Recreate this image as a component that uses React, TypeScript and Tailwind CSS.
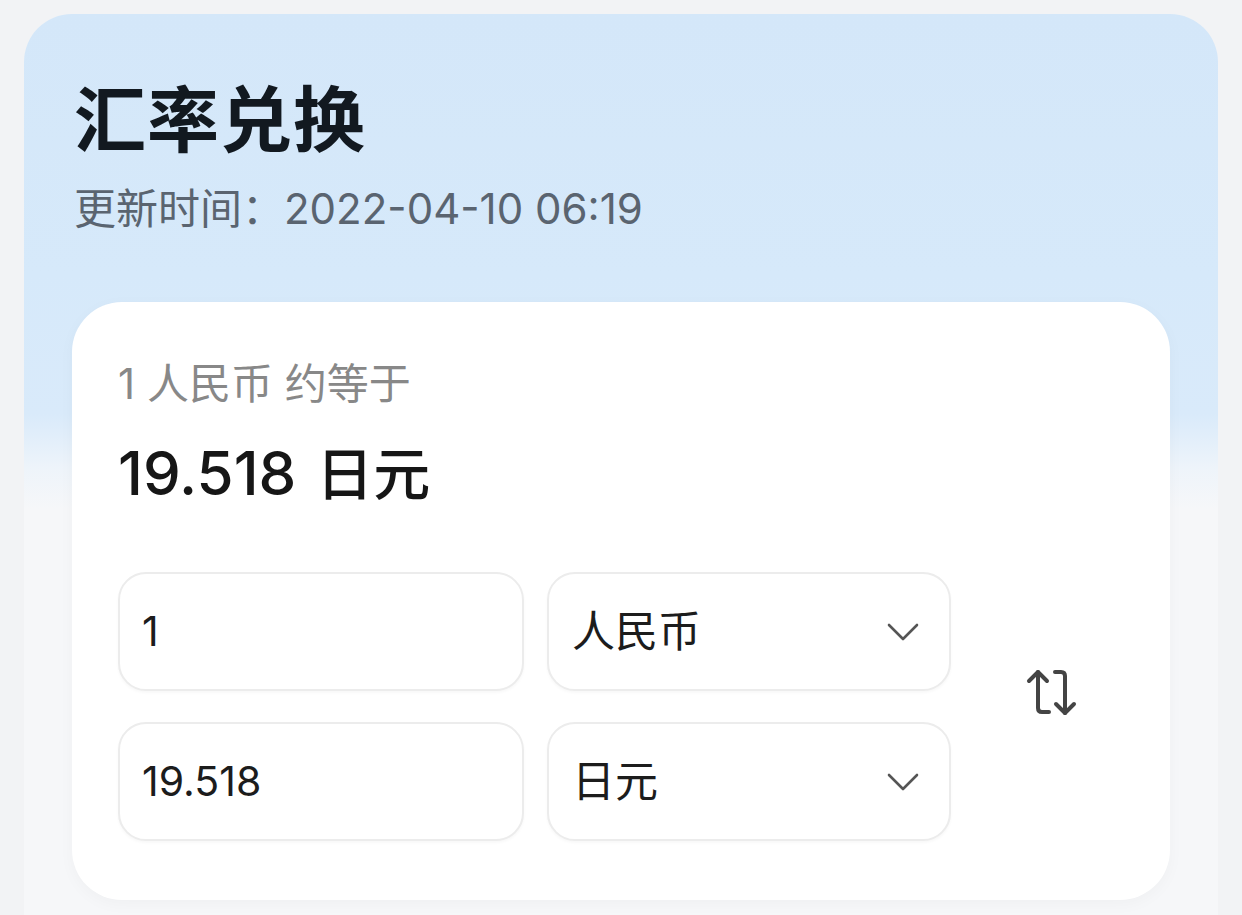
const font = { fontFamily: 'Inter, "Noto Sans CJK SC", sans-serif' }

function SwapIcon() {
  return (
    <svg width="54" height="50" viewBox="0 0 54 50" fill="none" stroke="#444" strokeWidth="4" strokeLinecap="round" strokeLinejoin="round">
      {/* up arrow, hook at bottom */}
      <path d="M4 13 L13 4 L22 13" />
      <path d="M13 4 V40 Q13 44 17 44 H24" />
      {/* down arrow, hook at top */}
      <path d="M30 4 H36 Q40 4 40 8 V45" />
      <path d="M31 36 L40 45 L49 36" />
    </svg>
  )
}

function Chevron() {
  return (
    <svg width="32" height="20" viewBox="0 0 32 20" fill="none" stroke="#555" strokeWidth="2.6" strokeLinecap="round" strokeLinejoin="round">
      <path d="M2 3 L16 17 L30 3" />
    </svg>
  )
}

function Field({ children }: { children: React.ReactNode }) {
  return (
    <div className="h-[119px] rounded-[28px] border-2 border-[#ececec] bg-white flex items-center pl-[22px] shadow-[0_2px_3px_rgba(0,0,0,0.03)]">
      {children}
    </div>
  )
}

function Select({ label }: { label: string }) {
  return (
    <div className="h-[119px] rounded-[28px] border-2 border-[#ececec] bg-white flex items-center justify-between pl-[23px] pr-[30px] shadow-[0_2px_3px_rgba(0,0,0,0.03)]">
      <span className="text-[43px] leading-none text-[#1c1c1c]">{label}</span>
      <Chevron />
    </div>
  )
}

export default function App() {
  return (
    <div className="w-[1242px] h-[915px] overflow-hidden bg-[#f2f3f5] pt-[14px] px-[24px]" style={font}>
      <div className="rounded-t-[48px] bg-[linear-gradient(180deg,#d4e7f9_0px,#d6e9fa_260px,#d9eafa_400px,#eef4fa_455px,#f6f7f9_495px,#f6f7f9_100%)] px-[48px] pt-[70px] pb-[60px]">
        {/* Header */}
        <h1 className="ml-[2px] text-[72px] leading-[72px] font-bold text-[#121920] tracking-[1px]">汇率兑换</h1>
        <p className="ml-[2px] mt-[29px] text-[42px] leading-[48px] text-[#5a6470]">更新时间：2022-04-10 06:19</p>

        {/* Card */}
        <div className="mt-[69px] rounded-[50px] bg-white pl-[46px] pt-[60px] pb-[59px] shadow-[0_4px_16px_rgba(0,0,0,0.03)]">
          <p className="text-[42px] leading-[44px] text-[#888]">1 人民币 约等于</p>
          <p className="mt-[36px] text-[60px] leading-[62px] font-medium text-[#161616]">
            <span>19.518</span>
            <span className="ml-[20px] text-[57px]">日元</span>
          </p>

          <div className="mt-[66px] flex items-center">
            <div className="grid grid-cols-[406px_404px] gap-x-[23px] gap-y-[31px]">
              <Field><span className="text-[41px] leading-none text-[#1c1c1c]">1</span></Field>
              <Select label="人民币" />
              <Field><span className="text-[41px] leading-none text-[#1c1c1c]">19.518</span></Field>
              <Select label="日元" />
            </div>
            <div className="ml-[74px] mb-[28px]">
              <SwapIcon />
            </div>
          </div>
        </div>
      </div>
    </div>
  )
}
